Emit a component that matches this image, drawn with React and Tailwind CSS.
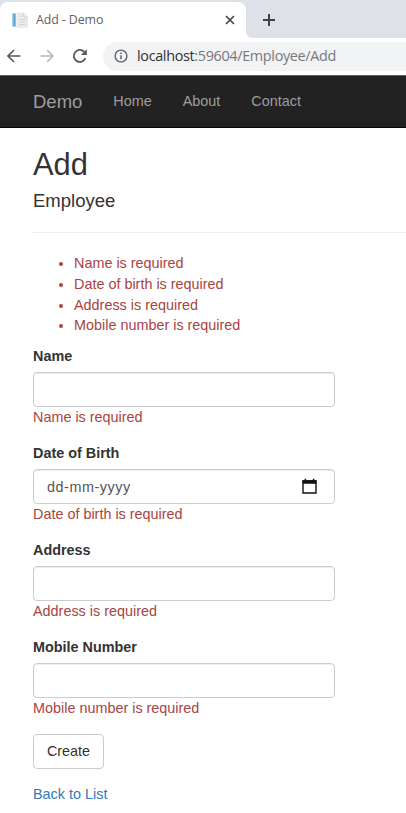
import React from "react";

const fields = [
  { label: "Name", error: "Name is required" },
  { label: "Date of Birth", error: "Date of birth is required", date: true },
  { label: "Address", error: "Address is required" },
  { label: "Mobile Number", error: "Mobile number is required" },
];

function TabStrip() {
  return (
    <div className="flex h-[38px] bg-[#dee1e8] pt-[2px]">
      <div className="flex h-9 w-[246px] shrink-0 items-center rounded-t-lg bg-white pl-3 pr-[10px]">
        <svg width="17" height="16" viewBox="0 0 17 16" className="shrink-0">
          <path d="M.3 1.5h3.4v13H.3z" fill="#5fa3d0" />
          <path d="M.3 1.5h1.2v13H.3z" fill="#a9cfe6" />
          <path d="M4.8 1h7l3.8 3.8v10.4H4.8z" fill="#eceeee" stroke="#dfe1e1" strokeWidth=".7" />
          <path d="M11.6 1v4h4M7 4h3M7 7.5h6.5M7 10h6.5M7 12.5h6.5" fill="none" stroke="#cbcfcf" strokeWidth=".9" />
        </svg>
        <span className="ml-[7px] whitespace-nowrap text-[12.4px] tracking-[-0.1px] text-[#5f6165]">Add - Demo</span>
        <svg width="12" height="12" viewBox="0 0 12 12" className="ml-auto shrink-0">
          <path d="M2 2l8 8M10 2l-8 8" stroke="#3f4144" strokeWidth="1.6" fill="none" />
        </svg>
      </div>
      {/* Flare on the lower right of the active tab */}
      <svg width="7" height="7" viewBox="0 0 7 7" className="self-end">
        <path d="M0 0q0 7 7 7H0z" fill="#fff" />
      </svg>
      <svg width="14" height="14" viewBox="0 0 14 14" className="ml-[9px] mt-[11px]">
        <path d="M7 1v12M1 7h12" stroke="#3f4144" strokeWidth="2" fill="none" />
      </svg>
    </div>
  );
}

function AddressBar() {
  return (
    <div className="flex h-[37px] items-center bg-white pb-px pl-[7px]">
      <svg width="14" height="14" viewBox="0 0 14 14" fill="none" stroke="#56585c" strokeWidth="1.6" className="shrink-0">
        <path d="M13.5 7H1.5M7 1L1 7l6 6" />
      </svg>
      <svg width="14" height="14" viewBox="0 0 14 14" fill="none" stroke="#b5b7ba" strokeWidth="1.5" className="ml-[19px] shrink-0">
        <path d="M.5 7h12M7 1l6 6-6 6" />
      </svg>
      <svg width="16" height="16" viewBox="0 0 16 16" className="ml-[18px] shrink-0">
        <path d="M13.4 10.2A6 6 0 1 1 12.2 3.8L13.6 5.2" fill="none" stroke="#56585c" strokeWidth="1.8" />
        <path d="M14.8 1.2v5.9H8.9z" fill="#56585c" />
      </svg>
      <div className="ml-[15px] flex h-[29px] flex-1 items-center rounded-l-full bg-[#f1f3f4] pl-[11px]">
        <svg width="14" height="14" viewBox="0 0 14 14" className="shrink-0">
          <circle cx="7" cy="7" r="5.9" fill="none" stroke="#5f6368" strokeWidth="1.4" />
          <path d="M7 6.2v4M7 3.5v1.5" stroke="#5f6368" strokeWidth="1.5" />
        </svg>
        <span className="ml-[9px] whitespace-nowrap text-[14.4px] tracking-[-0.33px] text-[#76797d]">
          <span className="text-[#303236]">localhost</span>:59604/Employee/Add
        </span>
      </div>
    </div>
  );
}

function Navbar() {
  return (
    <nav className="flex h-[53px] items-center border-y border-b-[#080808] border-t-[#5d5f5f] bg-[#222] pl-[33px] text-[14.4px] text-[#9d9d9d]">
      <a className="text-[18.5px]">Demo</a>
      <a className="ml-[31px]">Home</a>
      <a className="ml-[31px]">About</a>
      <a className="ml-[31px]">Contact</a>
    </nav>
  );
}

function Field({ label, error, date }) {
  return (
    <div className="mb-[15.8px]">
      <label className="mb-[5.1px] block font-bold">{label}</label>
      <div className="flex h-[35px] w-[302px] items-center justify-between rounded-[4px] border border-[#ccc] bg-white pl-[13px] pr-[17px] text-[#555] shadow-[inset_0_1px_1px_rgba(0,0,0,0.075)]">
        {date && (
          <>
            <span className="pt-px tracking-[0.55px]">dd-mm-yyyy</span>
            <svg width="15" height="17" viewBox="0 0 15 17">
              <path d="M1 3h13v12H1z" fill="none" stroke="#111" strokeWidth="1.4" />
              <path d="M.5 2.3h14v3.4H.5zM2.6.8h1.6v2H2.6zM10.8.8h1.6v2h-1.6z" fill="#111" />
            </svg>
          </>
        )}
      </div>
      <span className="block text-[#a94442]">{error}</span>
    </div>
  );
}

export default function App() {
  return (
    <div className="h-[813px] w-full overflow-hidden bg-white">
      <header className="font-['Open_Sans',sans-serif]">
        <TabStrip />
        <AddressBar />
      </header>
      <div className="font-['Liberation_Sans',Arial,sans-serif]">
        <Navbar />
        <main className="pl-[33px] pt-5 text-[14.4px] leading-[20.57px] text-[#333]">
          <h2 className="text-[30.9px] leading-[34px]">Add</h2>
          <h4 className="mt-[9px] text-[18.5px] leading-[20.4px]">Employee</h4>
          <hr className="mt-[21px] border-[#eee]" />
          <ul className="mb-[10.5px] mt-[20px] list-disc pl-[41px] text-[#a94442]">
            {fields.map((f) => (
              <li key={f.label}>{f.error}</li>
            ))}
          </ul>
          {fields.map((f) => (
            <Field key={f.label} {...f} />
          ))}
          <button className="block h-[35px] w-[71px] rounded-[4px] border border-[#ccc] bg-white">Create</button>
          <a className="mt-[15px] block text-[#337ab7]">Back to List</a>
        </main>
      </div>
    </div>
  );
}
